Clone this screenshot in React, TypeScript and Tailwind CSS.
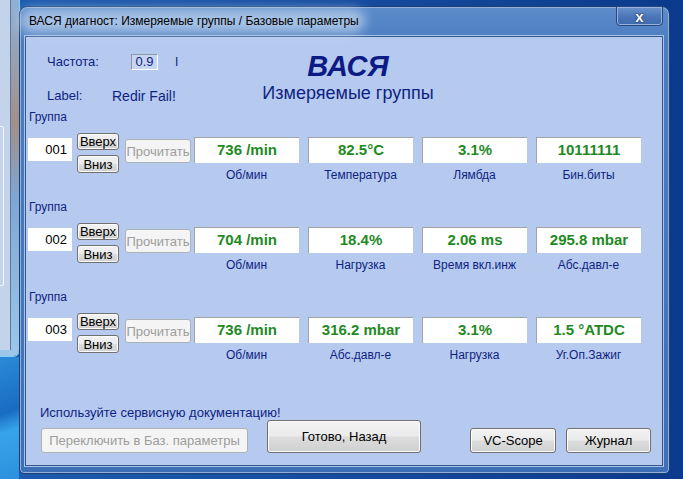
import React from "react";

const btn =
  "flex items-center justify-center rounded-[3px] border border-[#707070] bg-[linear-gradient(#f2f2f2_0%,#ebebeb_48%,#dddddd_52%,#cfcfcf_100%)] shadow-[inset_0_0_0_1px_#fbfbfb] text-[13px] text-black leading-none";

const btnDisabled =
  "flex items-center justify-center rounded-[3px] border border-[#adb2b5] bg-[#f4f4f4] text-[13px] text-[#9d9d9d] leading-none";

type Cell = { v: string; l: string };

const groups: { n: string; cells: Cell[] }[] = [
  {
    n: "001",
    cells: [
      { v: "736 /min", l: "Об/мин" },
      { v: "82.5°C", l: "Температура" },
      { v: "3.1%", l: "Лямбда" },
      { v: "10111111", l: "Бин.биты" },
    ],
  },
  {
    n: "002",
    cells: [
      { v: "704 /min", l: "Об/мин" },
      { v: "18.4%", l: "Нагрузка" },
      { v: "2.06 ms", l: "Время вкл.инж" },
      { v: "295.8 mbar", l: "Абс.давл-е" },
    ],
  },
  {
    n: "003",
    cells: [
      { v: "736 /min", l: "Об/мин" },
      { v: "316.2 mbar", l: "Абс.давл-е" },
      { v: "3.1%", l: "Нагрузка" },
      { v: "1.5 °ATDC", l: "Уг.Оп.Зажиг" },
    ],
  },
];

function Group({ n, cells, first }: { n: string; cells: Cell[]; first?: boolean }) {
  return (
    <div className={first ? "flex flex-col" : "mt-[16px] flex flex-col"}>
      <div className="h-[16px] pl-[3px] text-[12px] leading-[16px] text-[#0f1f82]">Группа</div>
      <div className="mt-[8px] flex items-start">
        <div className="ml-[2px] mt-[5px] flex h-[23px] w-[44px] items-center justify-end bg-white pr-[5px] text-[13px] text-black">
          {n}
        </div>
        <div className="ml-[5px] flex w-[42px] flex-col">
          <div className={btn + " h-[17px]"}>Вверх</div>
          <div className={btn + " mt-[5px] h-[18px]"}>Вниз</div>
        </div>
        <div className={btnDisabled + " ml-[6px] mt-[6px] h-[24px] w-[66px]"}>Прочитать</div>
        <div className="ml-[3px] flex gap-[9px]">
          {cells.map((c, i) => (
            <div key={i} className="flex w-[105px] flex-col items-center">
              <div className="mt-[4px] flex h-[26px] w-full items-center justify-center border-l border-t border-[#a3a3a3] bg-white text-[15px] font-bold text-[#1f8a1f]">
                {c.v}
              </div>
              <div className="mt-[4px] h-[16px] text-[12px] leading-[16px] text-[#0f1f82]">{c.l}</div>
            </div>
          ))}
        </div>
      </div>
    </div>
  );
}

export default function App() {
  return (
    <div
      className="relative h-[479px] w-[683px] overflow-hidden bg-[linear-gradient(90deg,#1c5cb0_0%,#14489c_60%,#0b3a8c_100%)]"
      style={{ fontFamily: '"Liberation Sans", Arial, sans-serif' }}
    >
      {/* background window on the left */}
      <div className="absolute left-0 top-0 flex h-[356px] w-[19px] rounded-br-[6px] bg-[linear-gradient(180deg,#8fb0d6_0%,#a38f86_35%,#7fa6d2_55%,#9cc7ea_100%)] shadow-[0_0_0_1px_#7fd0f5]">
        <div className="mb-[6px] w-[11px] border-r border-[#5a78a0] bg-[#c3d3ea]">
          <div className="ml-[-2px] mt-[126px] h-[160px] w-[6px] rounded-[2px] border border-[#f4f7fb]" />
        </div>
      </div>
      {/* desktop bottom-left */}
      <div className="absolute left-0 top-[357px] h-[122px] w-[19px] bg-[linear-gradient(160deg,#2a8ad8_0%,#1a6cc2_45%,#36a4ea_60%,#2b90dc_100%)]" />

      {/* main window */}
      <div className="absolute left-[19px] top-[6px] flex h-[468px] w-[651px] flex-col rounded-b-[5px] rounded-t-[8px] border border-[#1f3f70] bg-[linear-gradient(180deg,#5d8ccb_0%,#4b7cc0_8%,#4677bd_60%,#3e6fb6_100%)] shadow-[inset_0_0_0_1px_#8fb0dc]">
        {/* title bar */}
        <div className="relative flex h-[28px] items-center pl-[9px]">
          <div className="absolute left-[0px] top-[2px] h-[24px] w-[345px] rounded-full bg-[#c9dcf2] opacity-70 blur-[6px]" />
          <span className="relative text-[12px] text-black">ВАСЯ диагност: Измеряемые группы / Базовые параметры</span>
          <div className="absolute right-[6px] top-[-1px] flex h-[20px] w-[47px] items-center justify-center rounded-b-[4px] border border-[#27497e] bg-[linear-gradient(180deg,#6d93cc_0%,#4c78ba_50%,#3d69ae_100%)] shadow-[inset_0_0_0_1px_#93b2de]">
            <span className="text-[15px] font-bold leading-none text-white [text-shadow:0_0_2px_#1a2f55,0_0_1px_#1a2f55]">x</span>
          </div>
        </div>

        {/* client */}
        <div className="mb-[7px] ml-[5px] mr-[6px] mt-[1px] flex flex-1 flex-col border border-[#33598f] bg-[#b5caee] shadow-[0_0_0_1px_#a9c3e6]">
          {/* header */}
          <div className="flex h-[72px]">
            <div className="flex w-[224px] flex-col pl-[21px] pt-[17px]">
              <div className="flex h-[16px] items-center">
                <span className="w-[84px] text-[13px] text-[#0f1f82]">Частота:</span>
                <span className="flex h-[16px] w-[27px] items-center justify-center border-b border-l border-r border-t border-b-white border-l-[#8e98a8] border-r-white border-t-[#8e98a8] bg-[#c6d5f0] text-[13px] text-[#0f1f82]">
                  0.9
                </span>
                <span className="ml-[17px] text-[12px] text-[#0f1f82]">I</span>
              </div>
              <div className="mt-[18px] flex h-[16px] items-center">
                <span className="w-[65px] text-[13px] text-[#0f1f82]">Label:</span>
                <span className="text-[14px] text-[#0f1f82]">Redir Fail!</span>
              </div>
            </div>
            <div className="flex w-[196px] flex-col items-center pt-[14px]">
              <div className="h-[31px] text-[29px] font-bold italic leading-[31px] text-[#0c1a86]">ВАСЯ</div>
              <div className="h-[22px] text-[18px] leading-[22px] text-[#0f1f82]">Измеряемые группы</div>
            </div>
          </div>

          {/* groups */}
          {groups.map((g, i) => (
            <Group key={i} n={g.n} cells={g.cells} first={i === 0} />
          ))}

          {/* bottom */}
          <div className="mt-[42px] flex items-end">
            <div className="flex w-[222px] shrink-0 flex-col pl-[14px]">
              <div className="h-[16px] whitespace-nowrap text-[13px] leading-[16px] text-[#0f1f82]">Используйте сервисную документацию!</div>
              <div className={btnDisabled + " ml-[1px] mt-[7px] h-[25px] w-[207px] shrink-0 whitespace-nowrap"}>Переключить в Баз. параметры</div>
            </div>
            <div className={btn + " ml-[19px] h-[33px] w-[154px] shrink-0"}>Готово, Назад</div>
            <div className={btn + " ml-[49px] h-[25px] w-[86px] shrink-0"}>VC-Scope</div>
            <div className={btn + " ml-[10px] h-[25px] w-[85px] shrink-0"}>Журнал</div>
          </div>
        </div>
      </div>
    </div>
  );
}
